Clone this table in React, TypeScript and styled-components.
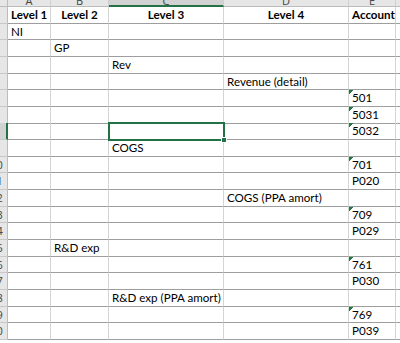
import React from "react";
import styled, { createGlobalStyle } from "styled-components";

const GlobalStyle = createGlobalStyle`
  html, body { margin: 0; padding: 0; background: #fff; }
  body { font-family: "Lato", "Liberation Sans", sans-serif; }
`;

const COLS = "22px 43px 58px 115px 125px 47px 60px";
const LETTERS = ["A", "B", "C", "D", "E", "F"];
const SELECTED_COL = 2;
const SELECTED_ROW = 8;

type RowData = {
  cells: string[];
  flag?: boolean;
};

const rows: RowData[] = [
  { cells: ["Level 1", "Level 2", "Level 3", "Level 4", "Account"] },
  { cells: ["NI", "", "", "", ""] },
  { cells: ["", "GP", "", "", ""] },
  { cells: ["", "", "Rev", "", ""] },
  { cells: ["", "", "", "Revenue (detail)", ""] },
  { cells: ["", "", "", "", "501"], flag: true },
  { cells: ["", "", "", "", "5031"], flag: true },
  { cells: ["", "", "", "", "5032"], flag: true },
  { cells: ["", "", "COGS", "", ""] },
  { cells: ["", "", "", "", "701"], flag: true },
  { cells: ["", "", "", "", "P020"] },
  { cells: ["", "", "", "COGS (PPA amort)", ""] },
  { cells: ["", "", "", "", "709"], flag: true },
  { cells: ["", "", "", "", "P029"] },
  { cells: ["", "R&D exp", "", "", ""] },
  { cells: ["", "", "", "", "761"], flag: true },
  { cells: ["", "", "", "", "P030"] },
  { cells: ["", "", "R&D exp (PPA amort)", "", ""] },
  { cells: ["", "", "", "", "769"], flag: true },
  { cells: ["", "", "", "", "P039"] },
];

const Frame = styled.div`
  width: 400px;
  height: 343px;
  overflow: hidden;
  background: #fff;
`;

const Sheet = styled.div`
  margin: -13px 0 0 -14px;
  width: 470px;
`;

const HeadRow = styled.div`
  display: grid;
  grid-template-columns: ${COLS};
  height: 20px;
  background: #e6e6e6;
`;

const Corner = styled.div`
  box-sizing: border-box;
  border-right: 1px solid #bcbcbc;
  border-bottom: 1px solid #bcbcbc;
`;

const ColHead = styled.div<{ $active?: boolean }>`
  box-sizing: border-box;
  height: 20px;
  padding-top: 8px;
  font-family: "Open Sans", "Liberation Sans", sans-serif;
  font-size: 11px;
  line-height: 12px;
  color: #444;
  text-align: center;
  background: ${(p) => (p.$active ? "#d2d2d2" : "#e6e6e6")};
  border-right: 1px solid #cfcfcf;
  border-bottom: ${(p) => (p.$active ? "2px solid #217346" : "1px solid #bcbcbc")};
`;

const Row = styled.div`
  display: grid;
  grid-template-columns: ${COLS};
  height: 16.65px;
`;

const RowHead = styled.div<{ $active?: boolean }>`
  box-sizing: border-box;
  font-family: "Open Sans", "Liberation Sans", sans-serif;
  font-size: 11px;
  line-height: 15px;
  color: #444;
  text-align: center;
  background: ${(p) => (p.$active ? "#d2d2d2" : "#e6e6e6")};
  border-right: ${(p) => (p.$active ? "2px solid #217346" : "1px solid #bcbcbc")};
  border-bottom: 1px solid #c8c8c8;
`;

const Cell = styled.div<{ $bold?: boolean; $flag?: boolean; $selected?: boolean }>`
  position: relative;
  box-sizing: border-box;
  padding: 0 3px;
  font-size: 11.6px;
  line-height: 15.65px;
  color: #000;
  white-space: nowrap;
  font-weight: ${(p) => (p.$bold ? 700 : 400)};
  text-align: ${(p) => (p.$bold ? "center" : "left")};
  border-right: 1px solid #d4d4d4;
  border-bottom: 1px solid #9e9e9e;
  background: ${(p) =>
    p.$flag
      ? "linear-gradient(135deg, #1f7a3f 0 3.2px, transparent 3.2px) no-repeat 0 0 / 6px 6px"
      : "transparent"};

  ${(p) =>
    p.$selected &&
    `
    z-index: 1;
    outline: 2px solid #217346;
    outline-offset: -1px;
    &::after {
      content: "";
      position: absolute;
      right: -4px;
      bottom: -4px;
      width: 4px;
      height: 4px;
      background: #217346;
      border: 1px solid #fff;
    }
  `}
`;

function App() {
  return (
    <Frame>
      <GlobalStyle />
      <Sheet>
        <HeadRow>
          <Corner />
          {LETTERS.map((l, i) => (
            <ColHead key={l} $active={i === SELECTED_COL}>
              {l}
            </ColHead>
          ))}
        </HeadRow>
        {rows.map((r, ri) => {
          const num = ri + 1;
          return (
            <Row key={num}>
              <RowHead $active={num === SELECTED_ROW}>{num}</RowHead>
              {[...r.cells, ""].map((text, ci) => (
                <Cell
                  key={ci}
                  $bold={num === 1}
                  $flag={r.flag && ci === 4}
                  $selected={num === SELECTED_ROW && ci === SELECTED_COL}
                >
                  {text}
                </Cell>
              ))}
            </Row>
          );
        })}
      </Sheet>
    </Frame>
  );
}

export default App;
